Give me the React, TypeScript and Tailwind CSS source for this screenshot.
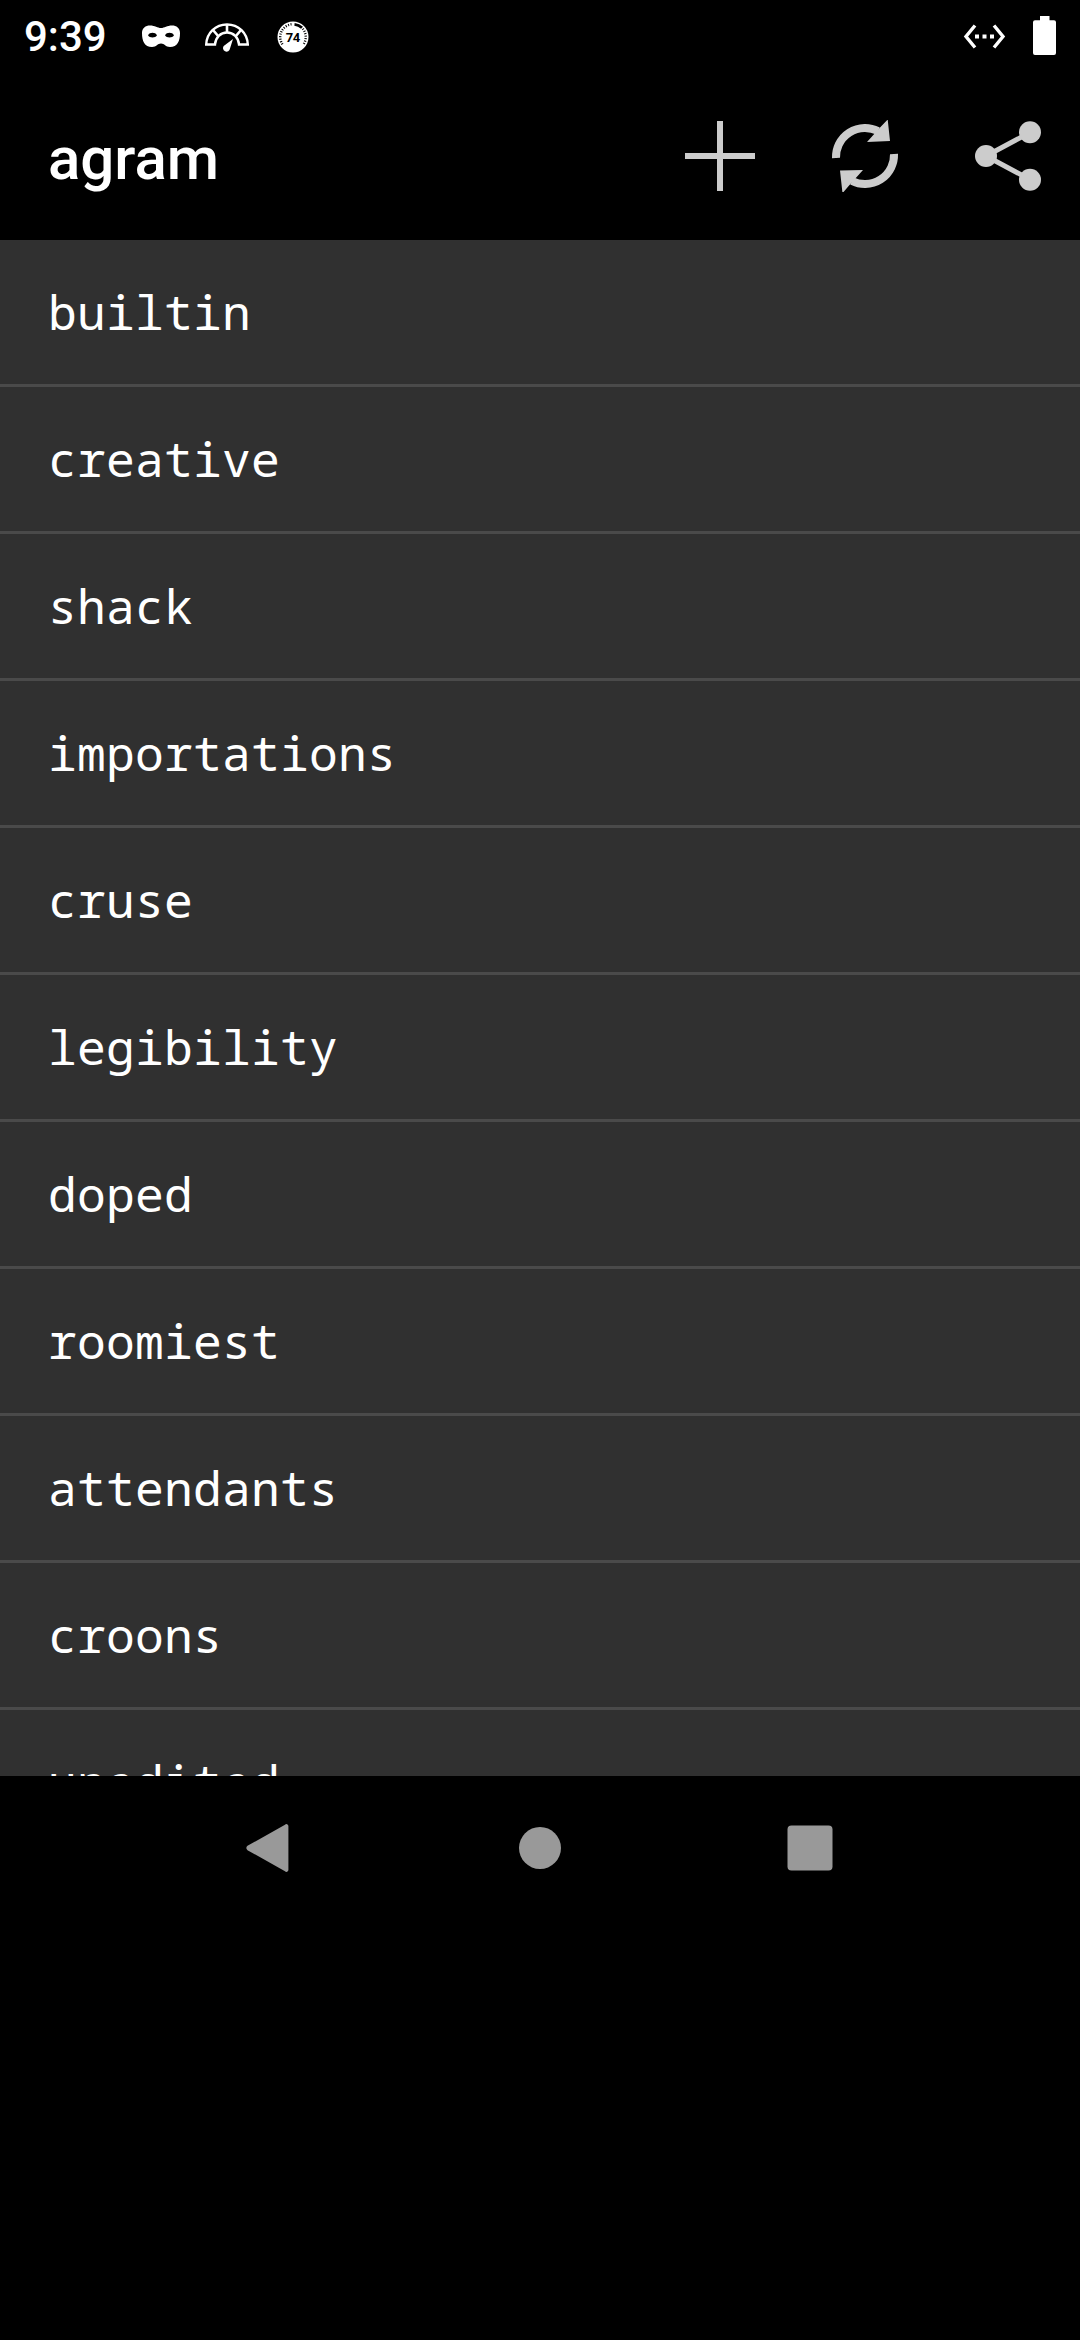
import React from "react";

const words = [
  "builtin",
  "creative",
  "shack",
  "importations",
  "cruse",
  "legibility",
  "doped",
  "roomiest",
  "attendants",
  "croons",
  "unedited",
];

function MaskIcon() {
  return (
    <svg width="40" height="24" viewBox="0 0 40 24" fill="none">
      <path
        fill="#fff"
        fillRule="evenodd"
        d="M1 8C1 3 4.500 .5 9 .5C14 .5 16.500 3 20 3C23.500 3 26 .5 31 .5C35.500 .5 39 3 39 8C39 16 36.500 22 29 22C24.500 22 23.500 18.500 20 18.500C16.500 18.500 15.500 22 11 22C3.500 22 1 16 1 8ZM7 10.300C8.500 13.200 14.500 13.200 16 10.300C14.500 7 8.500 7 7 10.300ZM24 10.300C25.500 13.200 31.500 13.200 33 10.300C31.500 7 25.500 7 24 10.300Z"
      />
    </svg>
  );
}

function GaugeIcon() {
  return (
    <svg width="44" height="30" viewBox="0 0 44 30" fill="none" stroke="#fff">
      <path
        strokeWidth="2.400"
        d="M1.200 21.500C1.700 10 10.500 1.500 22 1.500S42.300 10 42.800 21.500H34C33.500 14.500 28.500 9.500 22 9.500S10.500 14.500 10 21.500Z"
      />
      <path strokeWidth="2.600" d="M22 1V10M8 7L13.500 13.500M36 7L30.500 13.500" />
      <path stroke="none" fill="#fff" d="M28 16L25 25.500A3.500 3.500 0 1 1 19 22.700Z" />
    </svg>
  );
}

function CounterIcon() {
  return (
    <svg width="32" height="32" viewBox="0 0 32 32">
      <circle cx="16" cy="16" r="15.500" fill="#fff" />
      <path
        d="M5.500 23.300A12.800 12.800 0 0 1 16 3.200"
        fill="none"
        stroke="#000"
        strokeWidth="2.400"
        strokeDasharray="1 1.500"
      />
      <path d="M17.500 3.300A12.800 12.800 0 0 1 25 6.800" fill="none" stroke="#000" strokeWidth="2.800" />
      <path
        d="M25.800 7.800A12.800 12.800 0 0 1 26.500 23.300"
        fill="none"
        stroke="#000"
        strokeWidth="2.400"
        strokeDasharray="1 1.500"
      />
      <text
        x="15.700"
        y="20.500"
        textAnchor="middle"
        fontSize="13"
        fontWeight="700"
        letterSpacing="-0.5"
        fontFamily="Roboto, sans-serif"
      >
        74
      </text>
    </svg>
  );
}

function StatusBar() {
  return (
    <div className="flex h-[72px] items-start justify-between px-6">
      <div className="flex items-start">
        <span className="mt-3 w-[83px] whitespace-nowrap text-[42px] leading-[49px] font-medium">9:39</span>
        <div className="mt-[25px] ml-[34px]"><MaskIcon /></div>
        <div className="mt-[23px] ml-6"><GaugeIcon /></div>
        <div className="mt-[21px] ml-7"><CounterIcon /></div>
      </div>
      <div className="flex items-start">
        <svg className="mt-6" width="44" height="26" viewBox="0 0 44 26" fill="none">
          <path d="M13 1.500L4 12.500L13 23.500M32 1.500L41 12.500L32 23.500" stroke="#fff" strokeWidth="3.400" />
          <path d="M13 10.500h4v4h-4zM20.500 10.500h4v4h-4zM28 10.500h4v4h-4z" fill="#fff" />
        </svg>
        <svg className="mt-4 ml-[27px]" width="23" height="39" viewBox="0 0 23 39" fill="#fff">
          <path d="M7 0h9.500v4.200H21a2 2 0 0 1 2 2V37a2 2 0 0 1-2 2H2a2 2 0 0 1-2-2V6.200a2 2 0 0 1 2-2h5z" />
        </svg>
      </div>
    </div>
  );
}

function ActionBar() {
  return (
    <header className="flex h-[168px] items-center justify-between pl-12 pr-9">
      <h1 className="mt-1.5 text-[60px] leading-[70px] font-medium">agram</h1>
      <div className="flex gap-[72px]">
        <svg width="72" height="72" viewBox="0 0 72 72" fill="#cccccc">
          <path d="M33 1h6v32h32v6H39v32h-6V39H1v-6h32z" />
        </svg>
        <svg width="72" height="72" viewBox="0 0 72 72" fill="none">
          <path d="M8 38A29 29 0 0 1 50 11M66 34A29 29 0 0 1 24 61" stroke="#cccccc" strokeWidth="8" />
          <path d="M59.700-.5L62 21L39 22L52.500 7ZM14.500 73.200L12 50.500L35 50L21.500 65Z" fill="#cccccc" />
        </svg>
        <svg width="72" height="72" viewBox="0 0 72 72" fill="#cccccc">
          <path d="M58 12.500L14 36L58 59.500" fill="none" stroke="#cccccc" strokeWidth="5" />
          <circle cx="58" cy="12.300" r="11" />
          <circle cx="14" cy="36" r="11" />
          <circle cx="58" cy="59.700" r="11" />
        </svg>
      </div>
    </header>
  );
}

function NavBar() {
  return (
    <nav className="flex h-36 items-center justify-center gap-[222px]">
      <svg width="48" height="48" viewBox="0 0 48 48" fill="#999999">
        <path d="M1.500 21.800L39 .7A2 2 0 0 1 42.400 2V46A2 2 0 0 1 39 47.300L1.500 26.200A3 3 0 0 1 1.500 21.800Z" />
      </svg>
      <svg width="48" height="48" viewBox="0 0 48 48" fill="#999999">
        <circle cx="24" cy="24" r="21" />
      </svg>
      <svg width="48" height="48" viewBox="0 0 48 48" fill="#999999">
        <rect x="1.500" y="1.500" width="45" height="45" rx="4" />
      </svg>
    </nav>
  );
}

export default function App() {
  return (
    <div className="flex h-[2340px] w-[1080px] flex-col overflow-hidden bg-black font-['Roboto',sans-serif] text-white">
      <StatusBar />
      <ActionBar />
      <ul className="h-[1536px] overflow-hidden bg-[#303030] font-['Droid_Sans_Mono','Noto_Sans_Mono','DejaVu_Sans_Mono',monospace]">
        {words.map((word) => (
          <li
            key={word}
            className="flex h-[147px] items-center border-b-[3px] border-[#4a4a4a] pl-12 text-[48px] leading-[56px] tracking-[0.2px]"
          >
            {word}
          </li>
        ))}
      </ul>
      <NavBar />
    </div>
  );
}
